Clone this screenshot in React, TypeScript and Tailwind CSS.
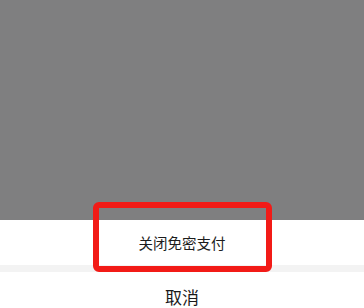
export default function App() {
  return (
    <div
      className="relative flex h-[308px] w-[364px] flex-col overflow-hidden bg-white"
      style={{ fontFamily: '"Noto Sans CJK SC", "Noto Sans", sans-serif' }}
    >
      {/* dimmed page behind the sheet */}
      <div className="h-[220px] shrink-0 bg-[#7f7f80]" />

      {/* action sheet */}
      <button className="flex h-[45px] shrink-0 items-center justify-center bg-white text-[14.5px] text-[#1c1c1c]">
        关闭免密支付
      </button>
      <div className="h-[7px] shrink-0 bg-[#f3f3f3]" />
      <button className="flex h-[50px] shrink-0 items-center justify-center bg-white text-[17px] text-[#1a1a1a]">
        取消
      </button>

      {/* red annotation box */}
      <div className="absolute left-[93px] top-[202px] h-[70px] w-[179px] rounded-md border-[6px] border-[#f21b17]" />
    </div>
  );
}
